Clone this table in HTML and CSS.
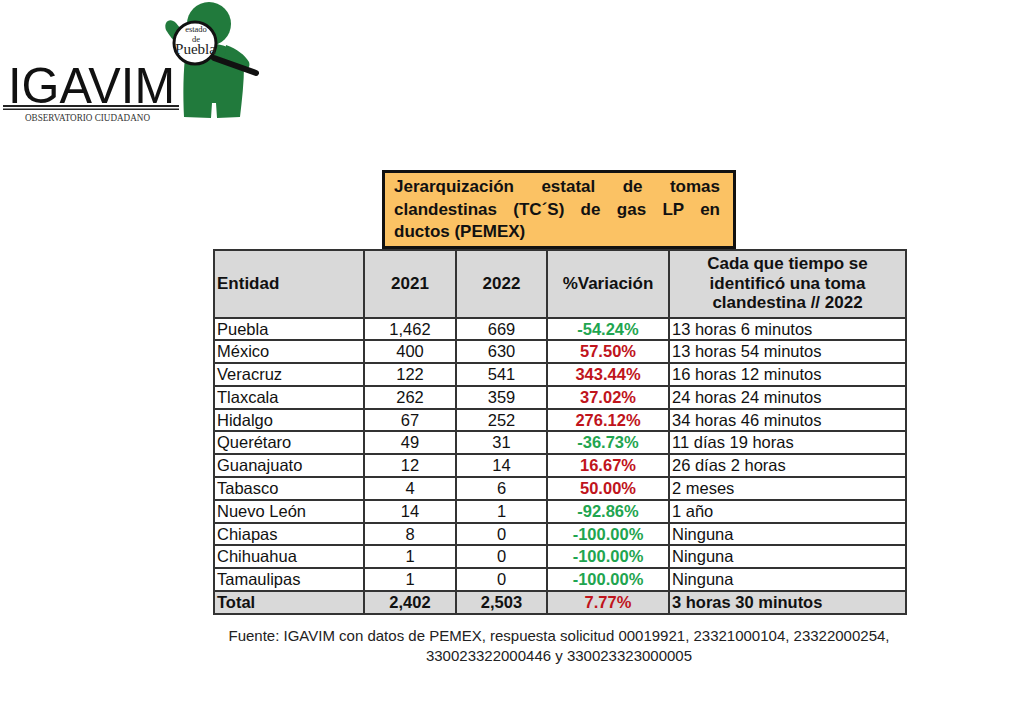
FILE: index.html
```html
<!DOCTYPE html>
<html lang="es">
<head>
<meta charset="utf-8">
<title>Jerarquización estatal de tomas clandestinas</title>
<link rel="stylesheet" href="styles.css">
</head>
<body>
<header class="logo">
  <svg class="logo-art" width="265" height="125" viewBox="0 0 265 125" xmlns="http://www.w3.org/2000/svg">
    <g fill="#217a3c">
      <circle cx="209" cy="24" r="22"/>
      <path d="M186 50 C183 70 183 95 184 117 L211 118 L212 103 L216 103 L217 118 L240 117 C242 100 244 82 244 66 C240 52 228 44 212 44 C200 44 190 46 186 50 Z"/>
      <path d="M190 56 C182 50 172 40 166 30 C163 22 170 17 176 23 L193 44 Z"/>
      <path d="M226 45 C237 49 245 55 249 62 C251 68 246 71 242 69 L224 62 Z"/>
    </g>
    <line x1="214" y1="58" x2="256" y2="73" stroke="#111" stroke-width="6" stroke-linecap="round"/>
    <circle cx="195" cy="43" r="21" fill="#fff" stroke="#111" stroke-width="3"/>
    <text class="lens-small" x="196" y="32" text-anchor="middle">estado</text>
    <text class="lens-small" x="196" y="42" text-anchor="middle">de</text>
    <text class="lens-big" x="195.5" y="54" text-anchor="middle" textLength="41" lengthAdjust="spacingAndGlyphs">Puebla</text>
    <text class="brand" x="8" y="103" textLength="167" lengthAdjust="spacingAndGlyphs">IGAVIM</text>
    <rect x="3" y="105" width="176" height="2" fill="#222"/>
    <rect x="3" y="108.5" width="176" height="1.5" fill="#222"/>
    <text class="tagline" x="25" y="121" textLength="125" lengthAdjust="spacingAndGlyphs">OBSERVATORIO CIUDADANO</text>
  </svg>
</header>

<main class="report">
  <div class="title">Jerarquización estatal de tomas clandestinas (TC´S) de gas LP en ductos (PEMEX)</div>
  <table class="data">
    <colgroup>
      <col class="c-ent"><col class="c-y1"><col class="c-y2"><col class="c-var"><col class="c-time">
    </colgroup>
    <thead>
      <tr>
        <th class="left">Entidad</th>
        <th>2021</th>
        <th>2022</th>
        <th>%Variación</th>
        <th>Cada que tiempo se identificó una toma clandestina // 2022</th>
      </tr>
    </thead>
    <tbody>
      <tr><td class="left">Puebla</td><td>1,462</td><td>669</td><td class="pct down">-54.24%</td><td class="left">13 horas 6 minutos</td></tr>
      <tr><td class="left">México</td><td>400</td><td>630</td><td class="pct up">57.50%</td><td class="left">13 horas 54 minutos</td></tr>
      <tr><td class="left">Veracruz</td><td>122</td><td>541</td><td class="pct up">343.44%</td><td class="left">16 horas 12 minutos</td></tr>
      <tr><td class="left">Tlaxcala</td><td>262</td><td>359</td><td class="pct up">37.02%</td><td class="left">24 horas 24 minutos</td></tr>
      <tr><td class="left">Hidalgo</td><td>67</td><td>252</td><td class="pct up">276.12%</td><td class="left">34 horas 46 minutos</td></tr>
      <tr><td class="left">Querétaro</td><td>49</td><td>31</td><td class="pct down">-36.73%</td><td class="left">11 días 19 horas</td></tr>
      <tr><td class="left">Guanajuato</td><td>12</td><td>14</td><td class="pct up">16.67%</td><td class="left">26 días 2 horas</td></tr>
      <tr><td class="left">Tabasco</td><td>4</td><td>6</td><td class="pct up">50.00%</td><td class="left">2 meses</td></tr>
      <tr><td class="left">Nuevo León</td><td>14</td><td>1</td><td class="pct down">-92.86%</td><td class="left">1 año</td></tr>
      <tr><td class="left">Chiapas</td><td>8</td><td>0</td><td class="pct down">-100.00%</td><td class="left">Ninguna</td></tr>
      <tr><td class="left">Chihuahua</td><td>1</td><td>0</td><td class="pct down">-100.00%</td><td class="left">Ninguna</td></tr>
      <tr><td class="left">Tamaulipas</td><td>1</td><td>0</td><td class="pct down">-100.00%</td><td class="left">Ninguna</td></tr>
    </tbody>
    <tfoot>
      <tr><td class="left">Total</td><td>2,402</td><td>2,503</td><td class="pct up">7.77%</td><td class="left">3 horas 30 minutos</td></tr>
    </tfoot>
  </table>
  <p class="source">Fuente: IGAVIM con datos de PEMEX, respuesta solicitud 00019921, 23321000104, 23322000254, 330023322000446 y 330023323000005</p>
</main>
</body>
</html>
```

FILE: styles.css
```css
html, body {
  margin: 0;
  padding: 0;
  background: #ffffff;
}

body {
  font-family: "Liberation Sans", Arial, sans-serif;
  color: #111;
}

.logo {
  height: 125px;
}

.logo-art {
  display: block;
}

.lens-small {
  font-family: "Liberation Serif", serif;
  font-size: 8.5px;
  fill: #222;
}

.lens-big {
  font-family: "Liberation Serif", serif;
  font-size: 14px;
  fill: #222;
}

.brand {
  font-family: "Liberation Sans", sans-serif;
  font-size: 50px;
  fill: #111;
}

.tagline {
  font-family: "Liberation Serif", serif;
  font-size: 10.5px;
  fill: #333;
}

.report {
  margin-left: 213px;
  width: 692px;
}

.title {
  box-sizing: border-box;
  width: 354px;
  margin: 45px 0 0 169px;
  border: 3px solid #111;
  background: #fbc264;
  padding: 3px 13px 2px 9px;
  font-weight: bold;
  font-size: 17px;
  line-height: 22.5px;
  text-align: justify;
  color: #111;
}

.data {
  width: 692px;
  border-collapse: collapse;
  table-layout: fixed;
  font-size: 16.5px;
}

.c-ent { width: 150px; }
.c-y1 { width: 92px; }
.c-y2 { width: 91px; }
.c-var { width: 122px; }
.c-time { width: 237px; }

.data th,
.data td {
  border: 2px solid #333;
  padding: 0 2px;
  text-align: center;
  white-space: nowrap;
}

.data th {
  background: #d9d9d9;
  font-size: 17px;
  font-weight: bold;
  line-height: 19.5px;
  height: 66px;
  white-space: normal;
  padding: 0 6px;
}

.data th.left {
  padding-left: 2px;
}

.data td {
  line-height: 20.8px;
  height: 20.8px;
}

.data .left {
  text-align: left;
}

.data .pct {
  font-weight: bold;
}

.data .up {
  color: #c0141c;
}

.data .down {
  color: #1fa550;
}

.data tfoot td {
  background: #d9d9d9;
  font-weight: bold;
}

.source {
  margin: 11px 0 0;
  text-align: center;
  font-size: 15px;
  line-height: 20px;
  color: #222;
}
```
